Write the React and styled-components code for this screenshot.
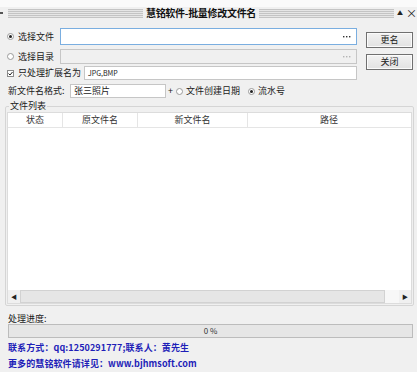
import React from "react";
import styled, { createGlobalStyle } from "styled-components";

const GlobalStyle = createGlobalStyle`
  html, body { margin: 0; padding: 0; background: #f0f0f0; }
  body { font-family: "Noto Sans CJK SC", "Noto Sans", sans-serif; }
`;

// >>> Window frame
const Window = styled.div`
  width: 417px;
  height: 372px;
  background: #f0f0f0;
  color: #1a1a1a;
  font-size: 9px;
  line-height: 12px;
  display: flex;
  flex-direction: column;
  overflow: hidden;
  box-sizing: border-box;
`;

// >>> Title bar
const TitleBar = styled.div`
  height: 22px;
  flex-shrink: 0;
  display: flex;
  align-items: center;
  padding: 4px 1px 0 0;
  box-sizing: border-box;
  background: linear-gradient(#fafafa 0, #fafafa 7px, #f0f0f0 7px);
`;

const Grip = styled.span`
  width: 3px;
  height: 2px;
  background: #555;
  margin-right: 5px;
`;

const Stripes = styled.div`
  flex: 1;
  height: 9px;
  background: repeating-linear-gradient(
    to bottom,
    #c4c4c4 0,
    #c4c4c4 1px,
    #e6e6e6 1px,
    #e6e6e6 2px
  );
`;

const Title = styled.div`
  font-weight: bold;
  font-size: 10px;
  padding: 0 3px;
  letter-spacing: -0.3px;
  color: #111;
`;

const TitleButton = styled.span`
  font-size: ${(p) => p.size || 9}px;
  width: ${(p) => p.w || 10}px;
  text-align: center;
  color: #222;
`;

// >>> Top form area
const Top = styled.div`
  display: flex;
  flex-shrink: 0;
  padding: 0 4px 0 7px;
`;

const Form = styled.div`
  flex: 1;
  display: flex;
  flex-direction: column;
`;

const Row = styled.div`
  display: flex;
  align-items: center;
  height: ${(p) => p.h}px;
  margin-top: ${(p) => p.mt}px;
`;

const LabelCell = styled.div`
  width: ${(p) => p.w}px;
  display: flex;
  align-items: center;
  gap: 4px;
  flex-shrink: 0;
`;

const Radio = styled.span`
  width: 7px;
  height: 7px;
  border: 1px solid #9a9a9a;
  border-radius: 50%;
  background: #fff;
  box-sizing: border-box;
  display: inline-flex;
  align-items: center;
  justify-content: center;
  flex-shrink: 0;
  &::after {
    content: "";
    width: 3px;
    height: 3px;
    border-radius: 50%;
    background: ${(p) => (p.checked ? "#222" : "transparent")};
  }
`;

const Check = styled.span`
  width: 7px;
  height: 7px;
  border: 1px solid #8a8a8a;
  background: #fff;
  box-sizing: border-box;
  display: inline-flex;
  align-items: center;
  justify-content: center;
  flex-shrink: 0;
`;

const Input = styled.div`
  flex: ${(p) => (p.w ? "none" : 1)};
  width: ${(p) => (p.w ? `${p.w}px` : "auto")};
  height: 100%;
  box-sizing: border-box;
  border: 1px solid ${(p) => (p.focus ? "#7aaee0" : "#c6c6c6")};
  background: ${(p) => (p.disabled ? "#f0f0f0" : "#fff")};
  display: flex;
  align-items: center;
  justify-content: ${(p) => (p.dots ? "flex-end" : "flex-start")};
  padding: 0 3px;
  font-size: ${(p) => p.fs || 9}px;
  color: ${(p) => (p.disabled ? "#b0b0b0" : "#222")};
`;

const DotsWrap = styled.span`
  display: inline-flex;
  margin: 0 2px 0 0;
`;

const Plain = styled.span`
  margin: ${(p) => p.m || "0"};
  white-space: nowrap;
  display: inline-flex;
`;

const Buttons = styled.div`
  width: 47px;
  margin-left: 9px;
  padding-top: 10px;
  display: flex;
  flex-direction: column;
  gap: 6px;
`;

const Button = styled.div`
  height: 16px;
  box-sizing: border-box;
  border: 1px solid #707070;
  background: linear-gradient(#f2f2f2, #e2e2e2);
  box-shadow: inset 0 0 0 1px #fbfbfb;
  display: flex;
  align-items: center;
  justify-content: center;
  font-size: 9px;
`;

// >>> File list group
const Group = styled.fieldset`
  margin: 2px 3px 0 5px;
  padding: 0 1px 1px 1px;
  border: 1px solid #d5d5d5;
  border-radius: 2px;
  min-width: 0;
  flex-shrink: 0;
`;

const Legend = styled.legend`
  padding: 0 1px;
  margin-left: 2px;
  font-size: 9px;
  line-height: 12px;
`;

const ListView = styled.div`
  height: 192px;
  border: 1px solid #dcdcdc;
  background: #fff;
  box-sizing: border-box;
  display: flex;
  flex-direction: column;
`;

const Header = styled.div`
  display: grid;
  grid-template-columns: 55px 75px 110px 1fr;
  height: 14px;
  border-bottom: 1px solid #e5e5e5;
  flex-shrink: 0;
`;

const HeaderCell = styled.div`
  display: flex;
  align-items: center;
  justify-content: center;
  border-right: 1px solid ${(p) => (p.last ? "transparent" : "#e5e5e5")};
  color: #333;
`;

const ListBody = styled.div`
  flex: 1;
`;

const HScroll = styled.div`
  height: 13px;
  display: flex;
  background: #f0f0f0;
  flex-shrink: 0;
`;

const ScrollArrow = styled.div`
  width: 12px;
  display: flex;
  align-items: center;
  justify-content: center;
  font-size: 6px;
  color: #222;
`;

const Thumb = styled.div`
  flex: 1;
  background: #e6e6e6;
  border: 1px solid #d2d2d2;
  box-sizing: border-box;
`;

const Track = styled.div`
  width: 14px;
  background: #f7f7f7;
`;

// >>> Progress + footer
const ProgressLabel = styled.div`
  margin: 7px 0 0 8px;
  height: 11px;
  flex-shrink: 0;
`;

const Progress = styled.div`
  margin: 0 4px 0 8px;
  height: 14px;
  flex-shrink: 0;
  border: 1px solid #bcbcbc;
  background: #e6e6e6;
  box-sizing: border-box;
  display: flex;
  align-items: center;
  justify-content: center;
  font-size: 8px;
  color: #333;
`;

const Contact = styled.div`
  margin: ${(p) => p.mt}px 0 0 8px;
  height: 12px;
  flex-shrink: 0;
  font-weight: bold;
  color: #1e1eb8;
  font-size: 9px;
  letter-spacing: 0.1px;
  white-space: nowrap;
`;

const CheckMark = () => (
  <svg width="5" height="5" viewBox="0 0 5 5">
    <path d="M0.5 2.5 L2 4 L4.5 1" fill="none" stroke="#222" strokeWidth="1" />
  </svg>
);

const Dots = ({ color }) => (
  <DotsWrap>
    <svg width="8" height="2" viewBox="0 0 8 2">
      <rect x="0" y="0" width="1.4" height="1.4" fill={color} />
      <rect x="3" y="0" width="1.4" height="1.4" fill={color} />
      <rect x="6" y="0" width="1.4" height="1.4" fill={color} />
    </svg>
  </DotsWrap>
);

export default function App() {
  return (
    <>
      <GlobalStyle />
      <Window>
        <TitleBar>
          <Grip />
          <Stripes />
          <Title>慧铭软件-批量修改文件名</Title>
          <Stripes />
          <TitleButton size={6} w={12}>▲</TitleButton>
          <TitleButton size={11} w={10}>×</TitleButton>
        </TitleBar>

        <Top>
          <Form>
            <Row h={17} mt={6}>
              <LabelCell w={53}>
                <Radio checked />
                选择文件
              </LabelCell>
              <Input focus dots>
                <Dots color="#333" />
              </Input>
            </Row>
            <Row h={15} mt={4}>
              <LabelCell w={53}>
                <Radio />
                选择目录
              </LabelCell>
              <Input disabled dots>
                <Dots color="#b4b4b4" />
              </Input>
            </Row>
            <Row h={14} mt={2}>
              <LabelCell w={77}>
                <Check>
                  <CheckMark />
                </Check>
                只处理扩展名为
              </LabelCell>
              <Input fs={7}>JPG,BMP</Input>
            </Row>
            <Row h={14} mt={4}>
              <LabelCell w={63}>
                <Plain m="0 0 0 1px">新文件名格式:</Plain>
              </LabelCell>
              <Input w={96}>张三照片</Input>
              <Plain m="0 3px 0 2px">+</Plain>
              <Radio />
              <Plain m="0 0 0 3px">文件创建日期</Plain>
              <Plain m="0 0 0 8px">
                <Radio checked />
              </Plain>
              <Plain m="0 0 0 3px">流水号</Plain>
            </Row>
          </Form>
          <Buttons>
            <Button>更名</Button>
            <Button>关闭</Button>
          </Buttons>
        </Top>

        <Group>
          <Legend>文件列表</Legend>
          <ListView>
            <Header>
              <HeaderCell>状态</HeaderCell>
              <HeaderCell>原文件名</HeaderCell>
              <HeaderCell>新文件名</HeaderCell>
              <HeaderCell last>路径</HeaderCell>
            </Header>
            <ListBody />
            <HScroll>
              <ScrollArrow>◀</ScrollArrow>
              <Thumb />
              <Track />
              <ScrollArrow>▶</ScrollArrow>
            </HScroll>
          </ListView>
        </Group>

        <ProgressLabel>处理进度:</ProgressLabel>
        <Progress>0 %</Progress>

        <Contact mt={4}>联系方式：qq:1250291777;联系人：黄先生</Contact>
        <Contact mt={4}>更多的慧铭软件请详见：www.bjhmsoft.com</Contact>
      </Window>
    </>
  );
}
